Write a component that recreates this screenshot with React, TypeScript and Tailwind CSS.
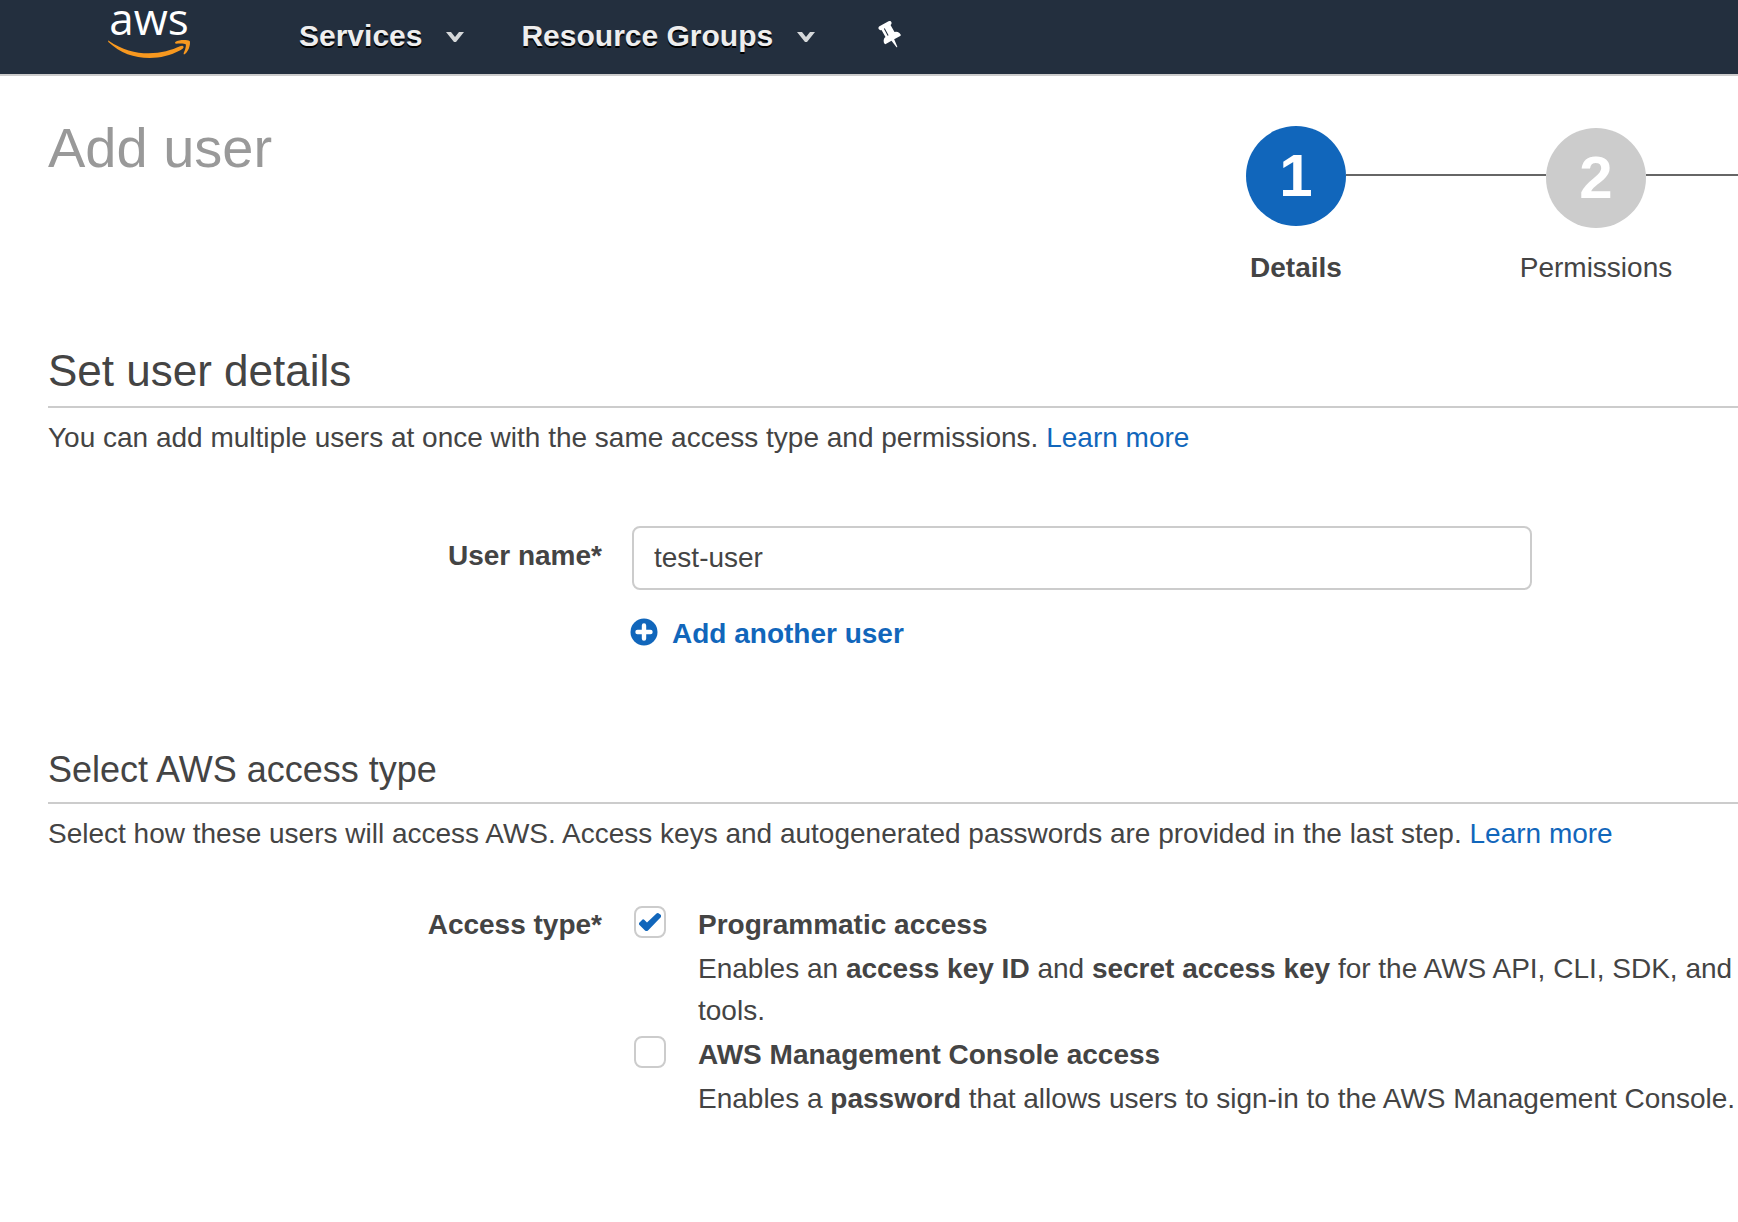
import { useState, type ReactNode } from "react";

function AwsLogo() {
  return (
    <a href="#home" aria-label="aws" className="ml-[107px] flex w-[84px] flex-col items-center">
      <span className="h-[39px] font-['Open_Sans','Noto_Sans',sans-serif] text-[44px] leading-9 font-medium text-white">aws</span>
      <svg viewBox="50 118 252 60" className="h-5 w-[84px]" fill="#f7981f" aria-hidden="true">
        <path d="M55 123C95 150 135 161 175 161C212 161 245 151 269 140Q279 136 280 143Q279 147 270 152C240 168 210 175 178 175C130 175 90 160 54 127Q52 122 55 123Z" />
        <path d="M255 127C265 120 290 120 298 124C301 128 298 152 284 163Q279 166 280 161C285 150 288 138 286 134C283 131 270 131 257 132Q252 131 255 127Z" />
      </svg>
    </a>
  );
}

function Caret() {
  return (
    <svg viewBox="0 0 18 10" className="mt-0.5 h-[10px] w-[18px]" fill="#d5d8da" aria-hidden="true">
      <path d="M0 0H5L9 5L13 0H18L10 10H8Z" />
    </svg>
  );
}

function NavMenu({ children }: { children: ReactNode }) {
  return (
    <button
      type="button"
      className="flex items-center gap-6 whitespace-nowrap text-3xl font-bold leading-9 text-[#eeeeee] [text-shadow:0_2px_0_#000]"
    >
      {children}
      <Caret />
    </button>
  );
}

function PinIcon() {
  return (
    <svg viewBox="-324 -324 1800 1800" className="size-[29px]" fill="#fff" aria-hidden="true">
      <g transform="translate(576 576) rotate(-29) scale(1 -1) translate(-576 -576)">
        <path d="M480 672v448q0 14 -9 23t-23 9t-23 -9t-9 -23v-448q0 -14 9 -23t23 -9t23 9t9 23zM1152 320q0 -26 -19 -45t-45 -19h-429l-51 -483q-2 -12 -10.5 -20.5t-20.5 -8.5h-1q-27 0 -32 27l-76 485h-404q-26 0 -45 19t-19 45q0 123 78.5 221.5t177.5 98.5v512q-52 0 -90 38t-38 90t38 90t90 38h640q52 0 90 -38t38 -90t-38 -90t-90 -38v-512q99 0 177.5 -98.5t78.5 -221.5z" />
      </g>
    </svg>
  );
}

function Step({ number, label, active = false }: { number: number; label: string; active?: boolean }) {
  return (
    <li className="w-[300px]" aria-current={active ? "step" : undefined}>
      <div className="flex h-[102px] items-start">
        <span className={`mt-12 h-0.5 flex-1 ${active ? "" : "bg-[#666666]"}`} />
        <span
          className={`flex size-[100px] items-center justify-center rounded-full text-6xl font-bold text-white ${
            active ? "bg-[#1166bb]" : "mt-0.5 bg-[#cccccc]"
          }`}
        >
          {number}
        </span>
        <span className="mt-12 h-0.5 flex-1 bg-[#666666]" />
      </div>
      <p className={`mt-5 text-center leading-10 ${active ? "font-bold" : ""}`}>{label}</p>
    </li>
  );
}

function AccessOption({
  id,
  title,
  initial = false,
  children,
}: {
  id: string;
  title: string;
  initial?: boolean;
  children: ReactNode;
}) {
  const [checked, setChecked] = useState(initial);
  return (
    <div className="mb-0.5 flex items-start gap-8">
      <span className="mt-0.5 ml-0.5 grid size-8 shrink-0 place-items-center">
        <input
          id={id}
          type="checkbox"
          checked={checked}
          onChange={(e) => setChecked(e.target.checked)}
          className="col-start-1 row-start-1 size-8 appearance-none rounded-lg border-2 border-[#cccccc] bg-white"
        />
        {checked && (
          <svg
            viewBox="0 0 22 18"
            className="pointer-events-none col-start-1 row-start-1 h-[18px] w-[22px]"
            fill="#1166bb"
            aria-hidden="true"
          >
            <path d="M0 10L3.5 6.5Q4.5 6 5.5 7L8 9.5L17.5 0.5Q18.5 -0.3 19.5 0.3L22 2V4L9 17.5Q7.5 18.5 6 17.5L0.5 12Q-0.4 11 0 10Z" />
          </svg>
        )}
      </span>
      <div className="whitespace-nowrap leading-[42px]">
        <label htmlFor={id} className="mb-0.5 block font-bold">
          {title}
        </label>
        <p>{children}</p>
      </div>
    </div>
  );
}

export default function App() {
  const [name, setName] = useState("test-user");
  return (
    <div className="min-h-screen overflow-x-hidden bg-white font-['Liberation_Sans',Arial,sans-serif] text-[28px] leading-11 text-[#444444]">
      <header className="flex items-start border-b-2 border-[#cccccc] bg-[#232f3e] pb-[15px]">
        <AwsLogo />
        <nav className="ml-[108px] flex items-center pt-[18px]">
          <NavMenu>Services</NavMenu>
          <span className="w-[57px]" />
          <NavMenu>Resource Groups</NavMenu>
          <button type="button" aria-label="Pin" className="mb-0.5 ml-[61px]">
            <PinIcon />
          </button>
        </nav>
      </header>

      <main className="pt-10 pl-12">
        <div className="flex items-start justify-between">
          <h1 className="text-[56px] leading-16 text-[#999999]">Add user</h1>
          <ol className="-mr-2 flex shrink-0 pt-[10px]">
            <Step number={1} label="Details" active />
            <Step number={2} label="Permissions" />
          </ol>
        </div>

        <section className="mt-14">
          <h2 className="border-b-2 border-[#cccccc] pb-2 text-[44px] leading-[54px]">Set user details</h2>
          <p className="mt-2">
            You can add multiple users at once with the same access type and permissions.{" "}
            <a href="#users" className="text-[#1166bb]">Learn more</a>
          </p>
          <div className="mt-[66px] flex items-start gap-[30px]">
            <label htmlFor="user-name" className="w-[554px] pt-2 text-right font-bold">
              User name*
            </label>
            <div className="mr-[206px] flex-1">
              <input
                id="user-name"
                type="text"
                value={name}
                onChange={(e) => setName(e.target.value)}
                className="block h-16 w-full rounded-lg border-2 border-[#cccccc] bg-white px-5"
              />
              <button type="button" className="mt-[22px] flex items-center gap-[14px] font-bold text-[#1166bb]">
                <svg viewBox="0 0 28 28" className="-ml-0.5 mb-1 size-7" aria-hidden="true">
                  <circle cx="14" cy="14" r="13.5" fill="#1166bb" />
                  <path d="M14 7.5V20.5M7.5 14H20.5" stroke="#fff" strokeWidth="4.4" strokeLinecap="round" />
                </svg>
                Add another user
              </button>
            </div>
          </div>
        </section>

        <section className="mt-[90px]">
          <h3 className="border-b-2 border-[#cccccc] pb-2 text-4xl leading-12">Select AWS access type</h3>
          <p className="mt-2">
            Select how these users will access AWS. Access keys and autogenerated passwords are provided in the last
            step.{" "}
            <a href="#access" className="text-[#1166bb]">Learn more</a>
          </p>
          <div role="group" aria-labelledby="access-type" className="mt-12 flex items-start gap-[30px]">
            <span id="access-type" className="w-[554px] shrink-0 text-right font-bold leading-[42px]">
              Access type*
            </span>
            <div>
              <AccessOption id="programmatic" title="Programmatic access" initial>
                Enables an <b>access key ID</b> and <b>secret access key</b> for the AWS API, CLI, SDK, and
                <br />
                tools.
              </AccessOption>
              <AccessOption id="console" title="AWS Management Console access">
                Enables a <b>password</b> that allows users to sign-in to the AWS Management Console.
              </AccessOption>
            </div>
          </div>
        </section>
      </main>
    </div>
  );
}
